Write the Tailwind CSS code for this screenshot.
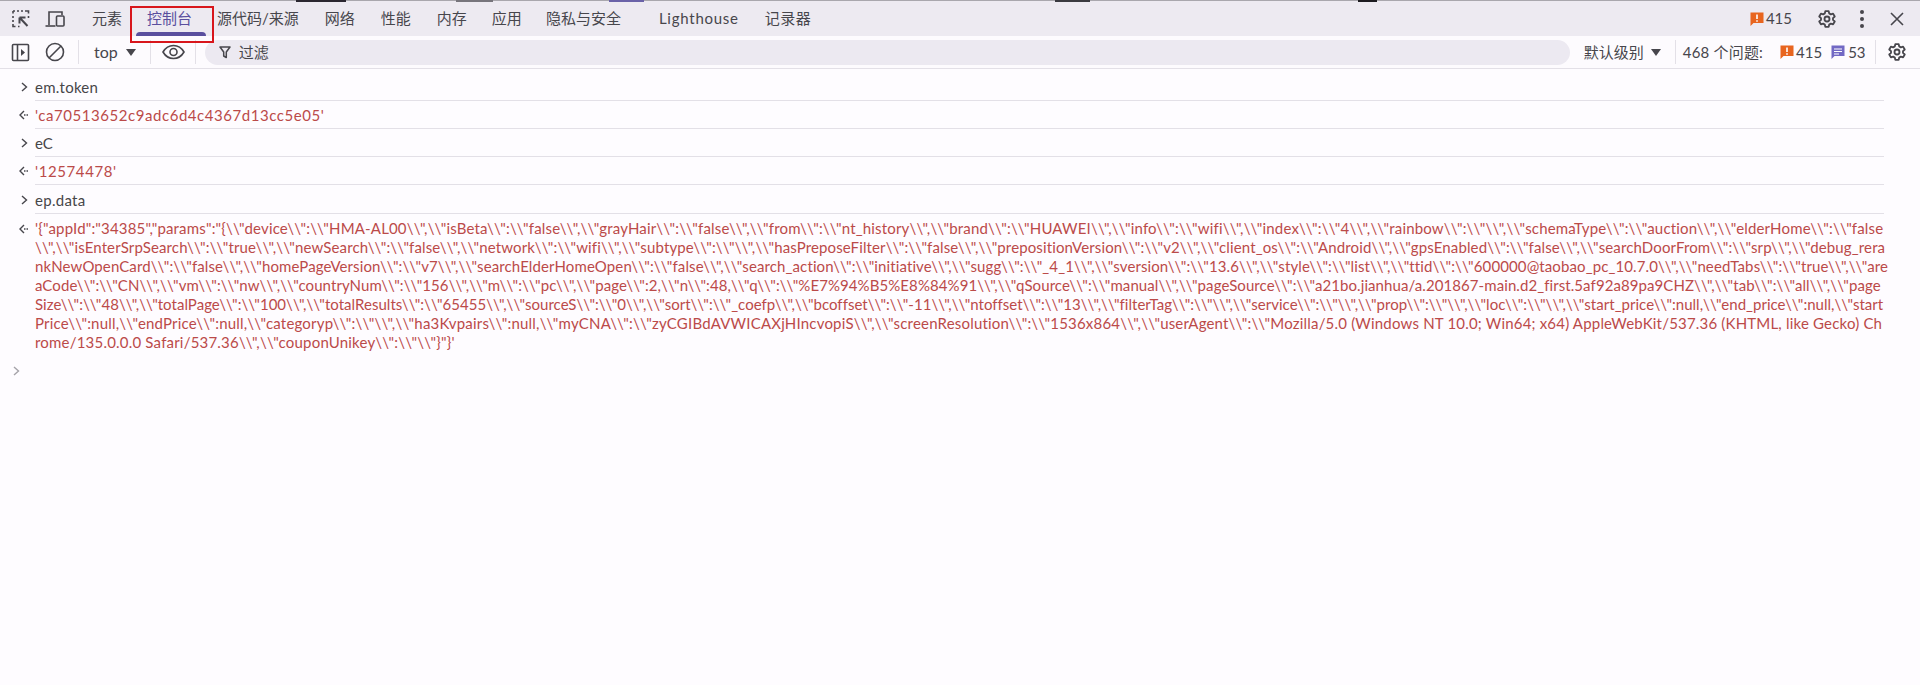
<!DOCTYPE html>
<html lang="zh-CN">

<head>
    <meta charset="UTF-8">
    <title>DevTools 控制台</title>
    <script src="https://cdn.jsdelivr.net/npm/@tailwindcss/browser@4"></script>
</head>

<body class="bg-[#fefcff] text-[#474649] font-['Lato','Noto_Sans_CJK_SC',sans-serif] overflow-hidden">
    <div class="relative w-[1920px] h-[685px] overflow-hidden">
        <!-- tab bar -->
        <div class="h-[36px] bg-[#edeaf1] border-t border-[#a9a7ad] flex items-center text-[15px] text-[#47464c] whitespace-nowrap">
            <div class="w-[11px]"></div>
            <svg class="w-[20px] h-[20px]" viewBox="0 0 20 20" fill="none" stroke="#47464c" stroke-width="1.600">
                <path d="M2 2h2M6 2h2M10 2h2M14 2h3.500v2.500M17.500 7v2M2 2v2.500M2 7v2M2 11v2M2 15v2.500h2.500M7 17.500h1.500"/>
                <path d="M8.500 8.500l8 8.500M8.500 8.500v6M8.500 8.500h6" stroke-width="2"/>
            </svg>
            <svg class="w-[20px] h-[20px] ml-[14px]" viewBox="0 0 20 20" fill="none" stroke="#47464c" stroke-width="1.600">
                <path d="M4 16V3h13v3"/>
                <path d="M0.500 17h10"/>
                <rect x="11.500" y="7" width="7.500" height="10" rx="1"/>
            </svg>
            <span class="ml-[27px]">元素</span>
            <span class="ml-[25px] text-[#5a4f9e]">控制台</span>
            <span class="ml-[25px]">源代码/来源</span>
            <span class="ml-[26px]">网络</span>
            <span class="ml-[26px]">性能</span>
            <span class="ml-[26px]">内存</span>
            <span class="ml-[25px]">应用</span>
            <span class="ml-[24px]">隐私与安全</span>
            <span class="ml-[38px] tracking-[0.75px]">Lighthouse</span>
            <span class="ml-[26px] tracking-[0.5px]">记录器</span>

            <div class="ml-auto flex items-center">
                <svg class="w-[14px] h-[16px]" viewBox="0 0 14 16">
                    <path d="M0.500 1.500h13v10.500H3.500L0.500 15z" fill="#e8651f"/>
                    <path d="M7 3.500v4.500M7 9.200v1.500" stroke="#fff" stroke-width="1.600"/>
                </svg>
                <span class="ml-[2px] text-[15px]">415</span>
                <svg class="ml-[25px] w-[20px] h-[20px]" viewBox="0 0 24 24" fill="none" stroke="#47464c" stroke-width="2.200">
                    <path d="M10 2.500h4l.6 2.800 2 1.100 2.700-.9 2 3.500-2.100 1.900v2.200l2.100 1.900-2 3.500-2.700-.9-2 1.100-.6 2.800h-4l-.6-2.800-2-1.100-2.700.9-2-3.500 2.100-1.900v-2.200L2.700 9l2-3.500 2.700.9 2-1.100z" stroke-linejoin="round"/>
                    <circle cx="12" cy="12" r="3"/>
                </svg>
                <div class="ml-[23px] flex flex-col gap-[3px]">
                    <i class="block w-[4px] h-[4px] rounded-full bg-[#47464c]"></i>
                    <i class="block w-[4px] h-[4px] rounded-full bg-[#47464c]"></i>
                    <i class="block w-[4px] h-[4px] rounded-full bg-[#47464c]"></i>
                </div>
                <svg class="ml-[26px] mr-[16px] w-[14px] h-[14px]" viewBox="0 0 14 14" stroke="#47464c" stroke-width="1.600">
                    <path d="M1 1l12 12M13 1L1 13"/>
                </svg>
            </div>
        </div>

        <!-- console toolbar -->
        <div class="h-[33px] bg-[#fdfbfe] border-b border-[#e3e0e7] flex items-center text-[15px] text-[#47464c] whitespace-nowrap">
            <svg class="ml-[11px] w-[19px] h-[19px]" viewBox="0 0 19 19" fill="none" stroke="#47464c" stroke-width="1.600">
                <rect x="1.500" y="1.500" width="16" height="16" rx="1"/>
                <path d="M6.500 1.500v16"/>
                <path d="M10 6l4 3.500-4 3.500z" fill="#47464c" stroke="none"/>
            </svg>
            <svg class="ml-[15px] w-[20px] h-[20px]" viewBox="0 0 20 20" fill="none" stroke="#47464c" stroke-width="1.600">
                <circle cx="10" cy="10" r="8.500"/>
                <path d="M4 16L16 4"/>
            </svg>
            <div class="ml-[13px] w-px h-[24px] bg-[#e3e0e7]"></div>
            <span class="ml-[15px] text-[16px]">top</span>
            <span class="ml-[8px] w-0 h-0 border-x-[5px] border-x-transparent border-t-[7px] border-t-[#47464c]"></span>
            <div class="ml-[14px] w-px h-[24px] bg-[#e3e0e7]"></div>
            <svg class="ml-[11px] w-[23px] h-[16px]" viewBox="0 0 23 16" fill="none" stroke="#47464c" stroke-width="1.600">
                <path d="M1 8c2.500-4.300 6-6.500 10.500-6.500S19.500 3.700 22 8c-2.500 4.300-6 6.500-10.500 6.500S3.500 12.300 1 8z"/>
                <circle cx="11.500" cy="8" r="3.500"/>
            </svg>
            <div class="ml-[10px] w-px h-[24px] bg-[#e3e0e7]"></div>
            <div class="ml-[9px] w-[1365px] h-[25px] rounded-full bg-[#ece9f1] flex items-center">
                <svg class="ml-[14px] w-[12px] h-[13px]" viewBox="0 0 12 13" fill="none" stroke="#47464c" stroke-width="1.500">
                    <path d="M1 1h10L7.300 6v5.500L4.700 10V6z" stroke-linejoin="round"/>
                </svg>
                <span class="ml-[8px]">过滤</span>
            </div>
            <span class="ml-[14px]">默认级别</span>
            <span class="ml-[7px] w-0 h-0 border-x-[5px] border-x-transparent border-t-[7px] border-t-[#47464c]"></span>
            <div class="ml-[14px] w-px h-[24px] bg-[#e3e0e7]"></div>
            <span class="ml-[7px] tracking-[0.2px]">468 个问题:</span>
            <svg class="ml-[17px] w-[14px] h-[16px]" viewBox="0 0 14 16">
                <path d="M0.500 1.500h13v10.500H3.500L0.500 15z" fill="#e8651f"/>
                <path d="M7 3.500v4.500M7 9.200v1.500" stroke="#fff" stroke-width="1.600"/>
            </svg>
            <span class="ml-[2px]">415</span>
            <svg class="ml-[9px] w-[14px] h-[16px]" viewBox="0 0 14 16">
                <path d="M0.500 1.500h13v10.500H3.500L0.500 15z" fill="#7269c4"/>
                <path d="M3 5h8M3 7.500h8M3 10h5" stroke="#fff" stroke-width="1.100"/>
            </svg>
            <span class="ml-[3px]">53</span>
            <div class="ml-[9px] w-px h-[24px] bg-[#e3e0e7]"></div>
            <svg class="ml-[11px] w-[20px] h-[20px]" viewBox="0 0 24 24" fill="none" stroke="#47464c" stroke-width="2.200">
                <path d="M10 2.500h4l.6 2.800 2 1.100 2.700-.9 2 3.500-2.100 1.900v2.200l2.100 1.900-2 3.500-2.700-.9-2 1.100-.6 2.800h-4l-.6-2.800-2-1.100-2.700.9-2-3.500 2.100-1.900v-2.200L2.700 9l2-3.500 2.700.9 2-1.100z" stroke-linejoin="round"/>
                <circle cx="12" cy="12" r="3"/>
            </svg>
        </div>

        <!-- console rows -->
        <div class="pt-[4px] text-[15px] whitespace-nowrap">
            <div class="flex h-[28px]">
                <div class="w-[35px] flex items-center justify-end pr-[7px]">
                    <svg class="w-[7px] h-[10px]" viewBox="0 0 7 10" fill="none" stroke="#47464c" stroke-width="1.400"><path d="M1 1l4.500 4L1 9"/></svg>
                </div>
                <div class="flex-1 mr-[36px] border-b border-[#e3e0e7] flex items-center pt-[2px] tracking-[0.25px]">em.token</div>
            </div>
            <div class="flex h-[28px]">
                <div class="w-[35px] flex items-center justify-end pr-[6px]">
                    <svg class="w-[10px] h-[10px]" viewBox="0 0 10 10" fill="none" stroke="#47464c" stroke-width="1.400"><path d="M5 1L1 5l4 4"/><path d="M5 5h5" stroke-dasharray="1.500 1"/></svg>
                </div>
                <div class="flex-1 mr-[36px] border-b border-[#e3e0e7] flex items-center pt-[1px] text-[#bb4a49] tracking-[0.55px]">'ca70513652c9adc6d4c4367d13cc5e05'</div>
            </div>
            <div class="flex h-[28px]">
                <div class="w-[35px] flex items-center justify-end pr-[7px]">
                    <svg class="w-[7px] h-[10px]" viewBox="0 0 7 10" fill="none" stroke="#47464c" stroke-width="1.400"><path d="M1 1l4.500 4L1 9"/></svg>
                </div>
                <div class="flex-1 mr-[36px] border-b border-[#e3e0e7] flex items-center pt-[2px]">eC</div>
            </div>
            <div class="flex h-[28px]">
                <div class="w-[35px] flex items-center justify-end pr-[6px]">
                    <svg class="w-[10px] h-[10px]" viewBox="0 0 10 10" fill="none" stroke="#47464c" stroke-width="1.400"><path d="M5 1L1 5l4 4"/><path d="M5 5h5" stroke-dasharray="1.500 1"/></svg>
                </div>
                <div class="flex-1 mr-[36px] border-b border-[#e3e0e7] flex items-center pt-[2px] text-[#bb4a49] tracking-[0.6px]">'12574478'</div>
            </div>
            <div class="flex h-[29px]">
                <div class="w-[35px] flex items-center justify-end pr-[7px]">
                    <svg class="w-[7px] h-[10px]" viewBox="0 0 7 10" fill="none" stroke="#47464c" stroke-width="1.400"><path d="M1 1l4.500 4L1 9"/></svg>
                </div>
                <div class="flex-1 mr-[36px] border-b border-[#e3e0e7] flex items-center pt-[2px] tracking-[0.3px]">ep.data</div>
            </div>
            <div class="flex pt-[5px]">
                <div class="w-[35px] h-[19px] flex items-center justify-end pr-[6px]">
                    <svg class="w-[10px] h-[10px]" viewBox="0 0 10 10" fill="none" stroke="#47464c" stroke-width="1.400"><path d="M5 1L1 5l4 4"/><path d="M5 5h5" stroke-dasharray="1.500 1"/></svg>
                </div>
                <div class="flex-1 leading-[19px] text-[#bb4a49]">
                    <div class="tracking-[0.17px]">'{"appId":"34385","params":"{\\"device\\":\\"HMA-AL00\\",\\"isBeta\\":\\"false\\",\\"grayHair\\":\\"false\\",\\"from\\":\\"nt_history\\",\\"brand\\":\\"HUAWEI\\",\\"info\\":\\"wifi\\",\\"index\\":\\"4\\",\\"rainbow\\":\\"\\",\\"schemaType\\":\\"auction\\",\\"elderHome\\":\\"false</div>
                    <div class="tracking-[0.13px]">\\",\\"isEnterSrpSearch\\":\\"true\\",\\"newSearch\\":\\"false\\",\\"network\\":\\"wifi\\",\\"subtype\\":\\"\\",\\"hasPreposeFilter\\":\\"false\\",\\"prepositionVersion\\":\\"v2\\",\\"client_os\\":\\"Android\\",\\"gpsEnabled\\":\\"false\\",\\"searchDoorFrom\\":\\"srp\\",\\"debug_rera</div>
                    <div class="tracking-[0.11px]">nkNewOpenCard\\":\\"false\\",\\"homePageVersion\\":\\"v7\\",\\"searchElderHomeOpen\\":\\"false\\",\\"search_action\\":\\"initiative\\",\\"sugg\\":\\"_4_1\\",\\"sversion\\":\\"13.6\\",\\"style\\":\\"list\\",\\"ttid\\":\\"600000@taobao_pc_10.7.0\\",\\"needTabs\\":\\"true\\",\\"are</div>
                    <div class="tracking-[0.08px]">aCode\\":\\"CN\\",\\"vm\\":\\"nw\\",\\"countryNum\\":\\"156\\",\\"m\\":\\"pc\\",\\"page\\":2,\\"n\\":48,\\"q\\":\\"%E7%94%B5%E8%84%91\\",\\"qSource\\":\\"manual\\",\\"pageSource\\":\\"a21bo.jianhua/a.201867-main.d2_first.5af92a89pa9CHZ\\",\\"tab\\":\\"all\\",\\"page</div>
                    <div class="tracking-[0.03px]">Size\\":\\"48\\",\\"totalPage\\":\\"100\\",\\"totalResults\\":\\"65455\\",\\"sourceS\\":\\"0\\",\\"sort\\":\\"_coefp\\",\\"bcoffset\\":\\"-11\\",\\"ntoffset\\":\\"13\\",\\"filterTag\\":\\"\\",\\"service\\":\\"\\",\\"prop\\":\\"\\",\\"loc\\":\\"\\",\\"start_price\\":null,\\"end_price\\":null,\\"start</div>
                    <div class="tracking-[0.19px]">Price\\":null,\\"endPrice\\":null,\\"categoryp\\":\\"\\",\\"ha3Kvpairs\\":null,\\"myCNA\\":\\"zyCGIBdAVWICAXjHIncvopiS\\",\\"screenResolution\\":\\"1536x864\\",\\"userAgent\\":\\"Mozilla/5.0 (Windows NT 10.0; Win64; x64) AppleWebKit/537.36 (KHTML, like Gecko) Ch</div>
                    <div class="tracking-[0.2px]">rome/135.0.0.0 Safari/537.36\\",\\"couponUnikey\\":\\"\\"}"}'</div>
                </div>
            </div>
            <div class="flex h-[20px] mt-[9px]">
                <div class="w-[35px] flex items-center justify-end pr-[15px]">
                    <svg class="w-[7px] h-[10px]" viewBox="0 0 7 10" fill="none" stroke="#a5a3a9" stroke-width="1.400"><path d="M1 1l4.500 4L1 9"/></svg>
                </div>
            </div>
        </div>

        <!-- bits of the page behind the window, along the top edge -->
        <div class="absolute left-[296px] top-0 w-[50px] h-[2px] bg-[#2b2730]"></div>
        <div class="absolute left-[456px] top-0 w-[37px] h-[2px] bg-[#77757c]"></div>
        <div class="absolute left-[609px] top-0 w-[35px] h-[2px] bg-[#6a62a8]"></div>
        <div class="absolute left-[1055px] top-0 w-[35px] h-[2px] bg-[#3a3a40]"></div>
        <div class="absolute left-[1358px] top-0 w-[19px] h-[2px] bg-[#1d1b20]"></div>

        <!-- annotation drawn on the screenshot -->
        <div class="absolute left-[136px] top-[32px] w-[70px] h-[4px] rounded-t bg-[#5a4f9e]"></div>
        <div class="absolute left-[130px] top-[6px] w-[84px] h-[37px] border-2 border-[#d8161c]"></div>
    </div>
</body>

</html>
